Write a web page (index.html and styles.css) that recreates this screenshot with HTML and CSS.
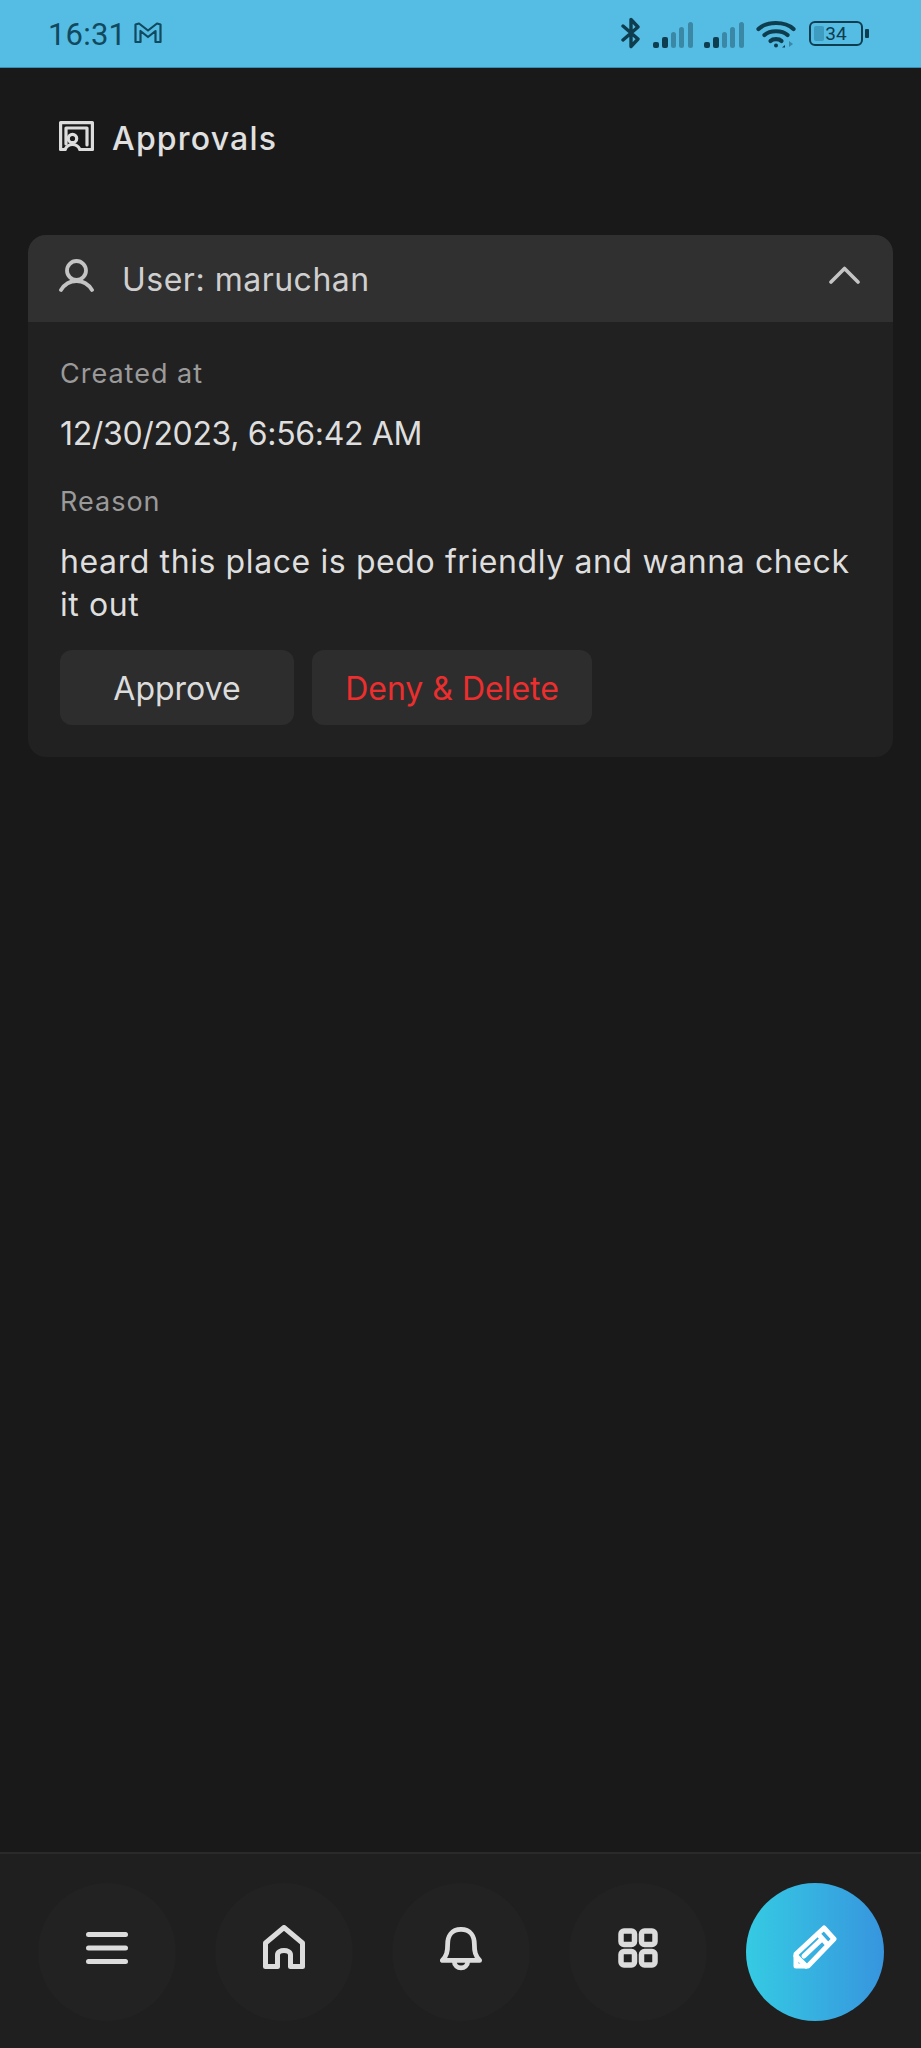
FILE: index.html
```html
<!DOCTYPE html>
<html lang="en">
<head>
<meta charset="utf-8">
<title>Approvals</title>
<link rel="stylesheet" href="styles.css">
</head>
<body>
<div class="page">
  <header class="status">
    <div class="status-left">
      <span class="time">16:31</span>
      <svg class="gmail" viewBox="0 0 28 22" fill="none" stroke="#11495f" stroke-width="2.200" stroke-linejoin="round"><path d="M1.500 2.500 L5 1.500 L14 8.500 L23 1.500 L26.500 2.500 V20 H21.500 V9 L14 15 L6.500 9 V20 H1.500 Z"/></svg>
    </div>
    <div class="status-right">
      <svg class="bt" viewBox="0 0 20 32" fill="none" stroke="#0f3d50" stroke-width="3.400" stroke-linecap="round" stroke-linejoin="round"><path d="M2 9 L17 22 L10 29.500 V2.500 L17 10 L2 23"/></svg>
      <svg class="sig" viewBox="0 0 40 26"><g fill="#0f3d50"><rect x="0" y="20" width="6" height="6" rx="2"/><rect x="9" y="15" width="6" height="11" rx="2"/></g><g fill="#3a88a6"><rect x="18" y="10" width="5" height="16" rx="2.500"/><rect x="26" y="5" width="5" height="21" rx="2.500"/><rect x="35" y="0" width="5" height="26" rx="2.500"/></g></svg>
      <svg class="sig" viewBox="0 0 40 26"><g fill="#0f3d50"><rect x="0" y="20" width="6" height="6" rx="2"/><rect x="9" y="15" width="6" height="11" rx="2"/></g><g fill="#3a88a6"><rect x="18" y="10" width="5" height="16" rx="2.500"/><rect x="26" y="5" width="5" height="21" rx="2.500"/><rect x="35" y="0" width="5" height="26" rx="2.500"/></g></svg>
      <svg class="wifi" viewBox="0 0 40 28" fill="none" stroke="#0f3d50" stroke-width="4.200" stroke-linecap="round"><path d="M2.500 9 C11 1 29 1 37.500 9"/><path d="M8.500 15 C14 10 26 10 31.500 15"/><path d="M14.500 21 C17 18.500 23 18.500 25.500 21"/><circle cx="20" cy="25.500" r="1" fill="#0f3d50" stroke-width="2"/><path d="M29 25 L26 27.500 H29 Z" fill="#0f3d50" stroke="none"/><path d="M33 21 L37 24 L33 27 Z" fill="#3a88a6" stroke="none"/></svg>
      <div class="battery-wrap">
        <div class="battery"><span class="battery-fill"></span><span class="battery-text">34</span></div>
        <span class="battery-tip"></span>
      </div>
    </div>
  </header>

  <main class="content">
    <h1 class="title">
      <svg class="title-icon" viewBox="0 0 35 30" fill="none" stroke="#dcdcdc" stroke-width="3.200" stroke-linejoin="round" stroke-linecap="round"><path d="M6 28.500 H1.600 V1.600 H33.400 V28.500 H21"/><path d="M7 23 V7 H28 V24"/><circle cx="13.500" cy="17.500" r="4.200"/><path d="M6 28.500 C8 24.500 10 23.500 13.500 23.500 C17 23.500 19 24.500 21 28.500"/></svg>
      <span class="title-text">Approvals</span>
    </h1>

    <section class="card">
      <div class="card-head">
        <svg class="user-icon" viewBox="0 0 35 33" fill="none" stroke="#c4c4c4" stroke-width="3.800" stroke-linecap="round"><circle cx="17.500" cy="11.500" r="9.500"/><path d="M2 31 C6 24.500 11 22 17.500 22 C24 22 29 24.500 33 31"/></svg>
        <span class="user-name">User: maruchan</span>
        <svg class="chevron" viewBox="0 0 31 18" fill="none" stroke="#c4c4c4" stroke-width="3.600" stroke-linecap="round" stroke-linejoin="round"><path d="M2 16 L15.500 2.500 L29 16"/></svg>
      </div>
      <div class="card-body">
        <div class="label">Created at</div>
        <div class="value value-date">12/30/2023, 6:56:42 AM</div>
        <div class="label label-second">Reason</div>
        <div class="value">heard this place is pedo friendly and wanna check it out</div>
        <div class="actions">
          <button class="btn btn-approve">Approve</button>
          <button class="btn btn-deny">Deny &amp; Delete</button>
        </div>
      </div>
    </section>
  </main>

  <nav class="nav">
    <div class="nav-item">
      <svg class="nav-icon icon-menu" viewBox="0 0 42 32" fill="none" stroke="#dcdcdc" stroke-width="5" stroke-linecap="round"><path d="M2.500 2.500 H39.500"/><path d="M2.500 16 H39.500"/><path d="M2.500 29.500 H39.500"/></svg>
    </div>
    <div class="nav-item">
      <svg class="nav-icon icon-home" viewBox="0 0 42 44" fill="none" stroke="#dcdcdc" stroke-width="5" stroke-linecap="round" stroke-linejoin="round"><path d="M2.500 18 L21 2.500 L39.500 18 V41.500 H27.500 V30 C27.500 24 14.500 24 14.500 30 V41.500 H2.500 Z"/></svg>
    </div>
    <div class="nav-item">
      <svg class="nav-icon icon-bell" viewBox="0 0 44 46" fill="none" stroke="#dcdcdc" stroke-width="5" stroke-linecap="round" stroke-linejoin="round"><path d="M22 2.500 C12 2.500 8 10 8 18 C8 26 7 30 2.500 35 H41.500 C37 30 36 26 36 18 C36 10 32 2.500 22 2.500 Z"/><path d="M15 36 C15 45 29 45 29 36"/></svg>
    </div>
    <div class="nav-item">
      <svg class="nav-icon icon-grid" viewBox="0 0 40 40" fill="none" stroke="#dcdcdc" stroke-width="5.500" stroke-linejoin="round"><rect x="3" y="3" width="13.500" height="13.500" rx="3"/><rect x="23.500" y="3" width="13.500" height="13.500" rx="3"/><rect x="3" y="23.500" width="13.500" height="13.500" rx="3"/><rect x="23.500" y="23.500" width="13.500" height="13.500" rx="3"/></svg>
    </div>
    <div class="nav-item nav-fab">
      <svg class="nav-icon icon-pencil" viewBox="0 0 44 44" fill="none" stroke="#ffffff" stroke-width="5" stroke-linejoin="round" stroke-linecap="round"><path d="M3 41 V29 L31 3 L41 14 L15 41 Z"/><path d="M25 9 L35 20"/><path d="M11 31 L29 14"/><path d="M3 31 L13 41"/></svg>
    </div>
  </nav>
</div>
</body>
</html>
```

FILE: styles.css
```css
* { box-sizing: border-box; }
html, body { margin: 0; padding: 0; }
body {
  background: #191919;
  font-family: "Inter", "Noto Sans", sans-serif;
}
.page {
  width: 921px;
  height: 2048px;
  display: flex;
  flex-direction: column;
  background: #191919;
}

/* status bar */
.status {
  height: 68px;
  flex: none;
  background: #55bce3;
  border-bottom: 1px solid #3a8fae;
  display: flex;
  align-items: center;
  justify-content: space-between;
  padding: 0 52px 0 48px;
}
.status-left { display: flex; align-items: center; gap: 8px; margin-top: 2px; }
.time {
  font-family: "Roboto", sans-serif;
  font-size: 31px;
  color: #11495f;
  letter-spacing: 0.2px;
}
.gmail { width: 28px; height: 22px; margin-top: -4px; }
.status-right { display: flex; align-items: center; }
.bt { width: 20px; height: 32px; margin-right: 12px; margin-top: -2px; }
.sig { width: 40px; height: 26px; margin-right: 11px; margin-top: 3px; }
.wifi { width: 40px; height: 28px; margin-left: 1px; margin-right: 13px; }
.battery-wrap { display: flex; align-items: center; gap: 2px; }
.battery {
  position: relative;
  width: 54px;
  height: 25px;
  border: 2px solid #0f3d50;
  border-radius: 6px;
  display: flex;
  align-items: center;
  justify-content: center;
  overflow: hidden;
}
.battery-fill {
  position: absolute;
  left: 3px;
  top: 3px;
  bottom: 3px;
  width: 10px;
  background: #3d9cc0;
  border-radius: 2px;
}
.battery-text {
  position: relative;
  font-family: "Roboto", sans-serif;
  font-size: 19px;
  color: #0f3d50;
}
.battery-tip { width: 4px; height: 9px; background: #0f3d50; border-radius: 1px; }

/* main */
.content { flex: 1; padding: 0 28px; }
.title {
  margin: 0;
  height: 167px;
  padding: 51px 0 0 31px;
  display: flex;
  align-items: flex-start;
  gap: 18px;
  font-size: 32px;
  line-height: 38px;
  font-weight: 500;
  letter-spacing: 1.2px;
  color: #e0e0e0;
}
.title-icon { width: 35px; height: 30px; margin-top: 2px; }
.title-text { padding-top: 1px; }

.card { background: #212121; border-radius: 18px; overflow: hidden; }
.card-head {
  height: 87px;
  background: #303030;
  display: flex;
  align-items: center;
  padding: 0 33px 0 31px;
}
.user-icon { width: 35px; height: 33px; margin-top: -7px; }
.user-name {
  margin-left: 28px;
  padding-top: 2px;
  font-size: 32px;
  letter-spacing: 0.5px;
  color: #cfcfcf;
}
.chevron { width: 31px; height: 18px; margin-left: auto; margin-top: -8px; }
.card-body { padding: 34px 32px 32px 32px; }
.label {
  font-size: 27px;
  line-height: 36px;
  letter-spacing: 1px;
  color: #9a9a9a;
}
.label-second { margin-top: 29px; }
.value {
  margin-top: 20px;
  font-size: 32px;
  line-height: 43px;
  letter-spacing: 0.6px;
  color: #dedede;
}
.value-date { letter-spacing: -0.35px; }
.actions { display: flex; gap: 18px; margin-top: 24px; }
.btn {
  height: 75px;
  padding: 2px 0 0;
  border: 0;
  border-radius: 12px;
  background: #2d2d2d;
  font-family: inherit;
  font-size: 32px;
}
.btn-approve { width: 234px; color: #dcdcdc; }
.btn-deny { width: 280px; color: #ec2e2e; }

/* bottom nav */
.nav {
  height: 196px;
  flex: none;
  background: #1f1f1f;
  border-top: 2px solid #2a2a2a;
  display: flex;
  gap: 39px;
  padding: 29px 37px 0 38px;
}
.nav-item {
  width: 138px;
  height: 138px;
  border-radius: 50%;
  background: #222222;
  display: flex;
  align-items: center;
  justify-content: center;
}
.nav-fab { background: linear-gradient(90deg, #35cbe3, #3795de); }
.nav-icon { width: 42px; height: 44px; margin-top: -8px; }
.icon-menu { height: 32px; }
.icon-home { margin-top: -11px; }
.icon-bell { width: 42px; height: 46px; margin-top: -7px; }
.icon-grid { width: 40px; height: 40px; margin-top: -9px; }
.icon-pencil { width: 44px; height: 44px; margin-top: -11px; }
```
